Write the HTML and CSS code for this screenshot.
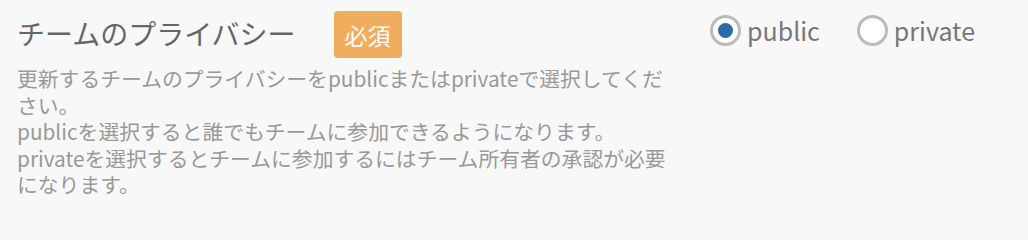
FILE: index.html
```html
<!DOCTYPE html>
<html lang="ja">
<head>
<meta charset="utf-8">
<link rel="stylesheet" href="styles.css">
</head>
<body>
<div class="field">
  <div class="field-main">
    <div class="field-head">
      <span class="field-title">チームのプライバシー</span>
      <span class="badge">必須</span>
    </div>
    <p class="field-desc">更新するチームのプライバシーをpublicまたはprivateで選択してください。<br>publicを選択すると誰でもチームに参加できるようになります。<br>privateを選択するとチームに参加するにはチーム所有者の承認が必要になります。</p>
  </div>
  <div class="radios">
    <label class="radio"><span class="radio-circle checked"></span><span class="radio-label">public</span></label>
    <label class="radio"><span class="radio-circle"></span><span class="radio-label">private</span></label>
  </div>
</div>
</body>
</html>
```

FILE: styles.css
```css
html, body {
  margin: 0;
  padding: 0;
  background: #f8f8f8;
}
body {
  font-family: "Noto Sans CJK JP", "Noto Sans", sans-serif;
  width: 1028px;
  height: 213px;
  overflow: hidden;
}
.field {
  display: flex;
  align-items: flex-start;
  padding: 11px 0 0 17px;
}
.field-main {
  width: 666px;
}
.field-head {
  display: flex;
  align-items: center;
  gap: 38px;
  height: 47px;
}
.field-title {
  font-size: 28px;
  color: #666;
  line-height: 1;
  margin-top: -3px;
}
.badge {
  display: inline-flex;
  align-items: center;
  justify-content: center;
  width: 68px;
  height: 47px;
  background: #f0ad5e;
  color: #fff;
  border-radius: 4px;
  font-size: 23px;
}
.field-desc {
  margin: 7px 0 0;
  font-size: 20.8px;
  line-height: 26.5px;
  color: #999;
}
.radios {
  display: flex;
  align-items: center;
  gap: 37px;
  margin-left: 27px;
  margin-top: 4px;
}
.radio {
  display: flex;
  align-items: center;
  gap: 6px;
}
.radio-circle {
  box-sizing: border-box;
  width: 31px;
  height: 31px;
  border: 3px solid #bbb;
  border-radius: 50%;
  background: #fff;
  display: flex;
  align-items: center;
  justify-content: center;
}
.radio-circle.checked::after {
  content: "";
  width: 15px;
  height: 15px;
  border-radius: 50%;
  background: #2b6aa8;
}
.radio-label {
  font-size: 25px;
  color: #777;
  line-height: 1;
}
```
